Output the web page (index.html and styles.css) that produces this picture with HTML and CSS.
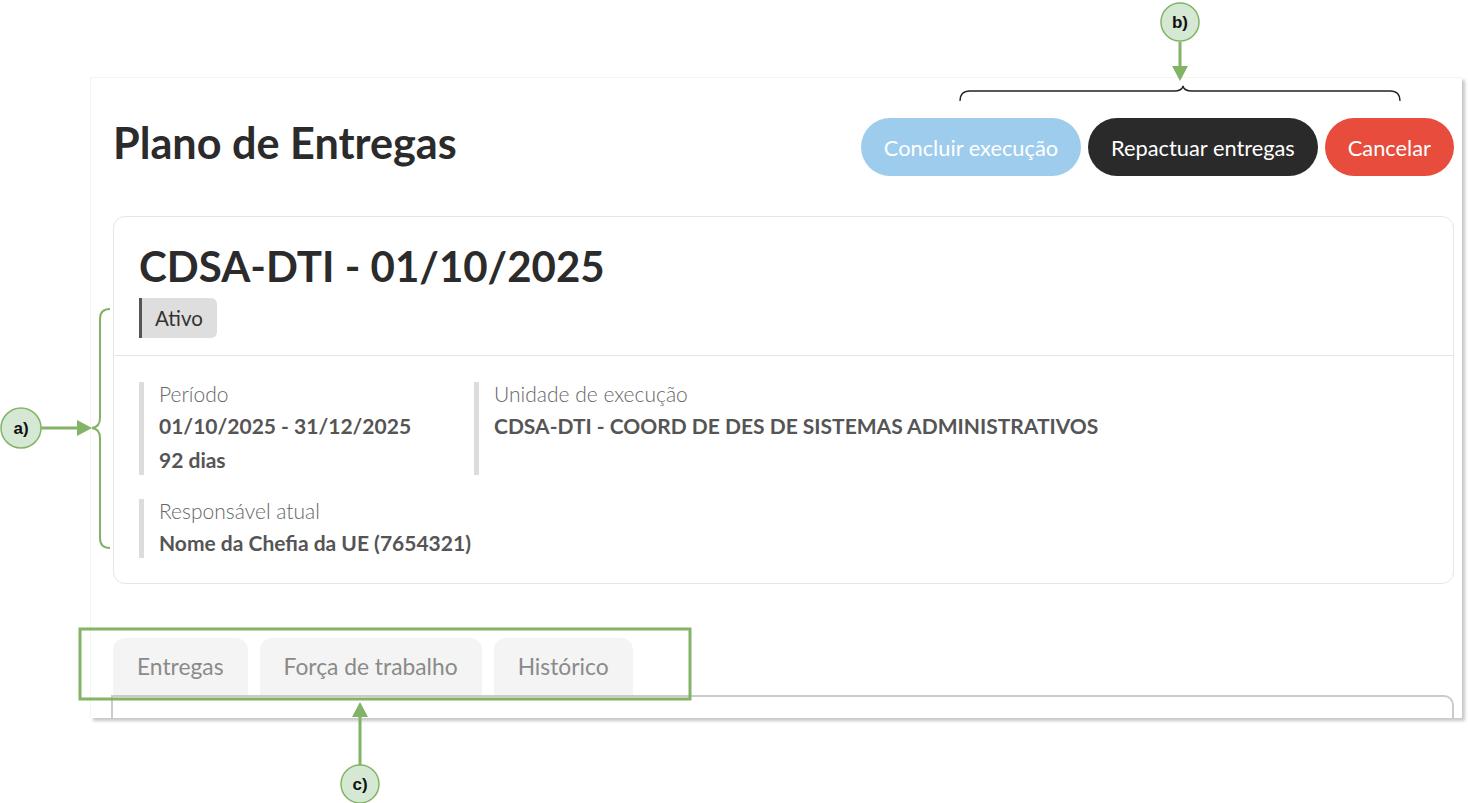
FILE: index.html
```html
<!DOCTYPE html>
<html lang="pt-BR">
<head>
  <meta charset="UTF-8"/>
  <meta name="viewport" content="width=device-width,initial-scale=1.0"/>
  <title>Plano de Entregas</title>
  <link rel="stylesheet" href="styles.css">
</head>
<body>
  <div class="stage">

    <section class="screen">
      <header class="page-head">
        <h1>Plano de Entregas</h1>
        <div class="actions">
          <button class="btn btn-info">Concluir execução</button>
          <button class="btn btn-dark">Repactuar entregas</button>
          <button class="btn btn-danger">Cancelar</button>
        </div>
      </header>

      <article class="plan-card">
        <div class="plan-top">
          <h2>CDSA-DTI - 01/10/2025</h2>
          <span class="badge">Ativo</span>
        </div>
        <div class="plan-info">
          <div class="info-row">
            <div class="info info-first">
              <span class="info-label">Período</span>
              <strong class="info-value">01/10/2025 - 31/12/2025</strong>
              <strong class="info-value">92 dias</strong>
            </div>
            <div class="info">
              <span class="info-label">Unidade de execução</span>
              <strong class="info-value">CDSA-DTI - COORD DE DES DE SISTEMAS ADMINISTRATIVOS</strong>
            </div>
          </div>
          <div class="info-row">
            <div class="info">
              <span class="info-label">Responsável atual</span>
              <strong class="info-value">Nome da Chefia da UE (7654321)</strong>
            </div>
          </div>
        </div>
      </article>

      <nav class="tabs">
        <a class="tab">Entregas</a>
        <a class="tab">Força de trabalho</a>
        <a class="tab">Histórico</a>
      </nav>
      <div class="tab-panel"></div>
    </section>

    <!-- callouts drawn over the screenshot -->
    <svg class="notes" width="1468" height="803" viewBox="0 0 1468 803">
      <g fill="none" stroke="#222" stroke-width="1.3">
        <path d="M960,101 Q960,91 970,91 L1174,91 Q1182,91 1183,86 Q1184,91 1192,91 L1390,91 Q1400,91 1400,101"/>
      </g>
      <g stroke="#82b366" stroke-width="3" fill="none">
        <line x1="1180" y1="42" x2="1180" y2="70"/>
        <line x1="41" y1="428" x2="80" y2="428"/>
        <line x1="360" y1="765" x2="360" y2="714"/>
        <rect x="80" y="629" width="610" height="70"/>
      </g>
      <path d="M110,309 Q100,309 100,319 L100,418 Q100,427 92,428 Q100,429 100,438 L100,538 Q100,548 110,548" fill="none" stroke="#82b366" stroke-width="2"/>
      <g fill="#82b366">
        <polygon points="1172,66 1188,66 1180,81"/>
        <polygon points="77,420 92,428 77,436"/>
        <polygon points="352,717 368,717 360,702"/>
      </g>
      <g fill="#d5e8d4" stroke="#82b366" stroke-width="1.5">
        <circle cx="1180" cy="22" r="19"/>
        <circle cx="21" cy="428" r="20"/>
        <circle cx="360" cy="784" r="19"/>
      </g>
      <g class="note-text" text-anchor="middle">
        <text x="1180" y="28">b)</text>
        <text x="21" y="434">a)</text>
        <text x="360" y="790">c)</text>
      </g>
    </svg>

  </div>
</body>
</html>
```

FILE: styles.css
```css
:root {
  --ink:    #2b2b2b;
  --text:   #555555;
  --muted:  #8a8a8a;
  --line:   #e6e6e6;
  --bar:    #dcdcdc;
  --info:   #9dcced;
  --dark:   #2a2a2a;
  --danger: #e74c3c;
  --white:  #ffffff;
}
* {
  box-sizing: border-box;
  margin: 0;
  padding: 0;
}
body {
  font-family: Lato, "Open Sans", Arial, sans-serif;
  background: var(--white);
  color: var(--ink);
}
.stage {
  position: relative;
  width: 1468px;
  height: 803px;
  padding: 77px 0 0 90px;
  overflow: hidden;
}

/* the app screenshot */
.screen {
  width: 1372px;
  height: 641px;
  overflow: hidden;
  background: var(--white);
  border: 1px solid #f3f3f3;
  border-right: none;
  border-bottom: none;
  box-shadow: 3px 3px 3px rgba(0,0,0,0.22);
  padding: 40px 8px 0 22px;
}
.page-head {
  display: flex;
  align-items: flex-start;
  justify-content: space-between;
}
.page-head h1 {
  font-size: 43.2px;
  line-height: 50px;
  font-weight: 700;
  margin-top: -1px;
}
.actions {
  display: flex;
  gap: 7px;
}
.btn {
  height: 58px;
  padding: 0 23px;
  border: none;
  border-radius: 29px;
  font-family: inherit;
  font-size: 21.8px;
  color: var(--white);
  cursor: pointer;
}
.btn-info   { background: var(--info); }
.btn-dark   { background: var(--dark); }
.btn-danger { background: var(--danger); }

/* plan card */
.plan-card {
  margin-top: 40px;
  border: 1px solid var(--line);
  border-radius: 12px;
}
.plan-top {
  padding: 24px 25px 17px;
  border-bottom: 1px solid var(--line);
}
.plan-top h2 {
  font-size: 42px;
  line-height: 50px;
  font-weight: 700;
}
.badge {
  display: inline-block;
  margin-top: 7px;
  height: 40px;
  line-height: 40px;
  padding: 0 14px 0 13px;
  background: #dedede;
  border-left: 3px solid #555;
  border-radius: 0 6px 6px 0;
  font-size: 20.5px;
  color: #333;
}
.plan-info {
  display: flex;
  flex-direction: column;
  gap: 24px;
  padding: 26px 25px 25px;
}
.info-row {
  display: flex;
}
.info {
  display: flex;
  flex-direction: column;
  border-left: 5px solid var(--bar);
  padding-left: 15px;
}
.info-first {
  width: 335px;
}
.info-label {
  font-size: 21px;
  line-height: 24px;
  font-weight: 300;
  color: #666;
}
.info-value {
  font-size: 21px;
  line-height: 30px;
  font-weight: 700;
  color: var(--text);
  margin-top: 4px;
  white-space: nowrap;
}
.info-label + .info-value {
  margin-top: 5px;
}

/* tabs */
.tabs {
  display: flex;
  gap: 12px;
  margin-top: 54px;
}
.tab {
  height: 57px;
  line-height: 57px;
  padding: 0 24px;
  background: #f4f4f4;
  border-radius: 12px 12px 0 0;
  font-size: 22.8px;
  color: var(--muted);
  cursor: pointer;
}
.tab-panel {
  margin-left: -2px;
  height: 60px;
  border: 2px solid #cbcbcb;
  border-radius: 0 10px 0 0;
}

/* callouts */
.notes {
  position: absolute;
  top: 0;
  left: 0;
  pointer-events: none;
}
.note-text {
  font-family: "Liberation Sans", Arial, sans-serif;
  font-weight: 700;
  font-size: 17px;
  fill: #111;
}
```
